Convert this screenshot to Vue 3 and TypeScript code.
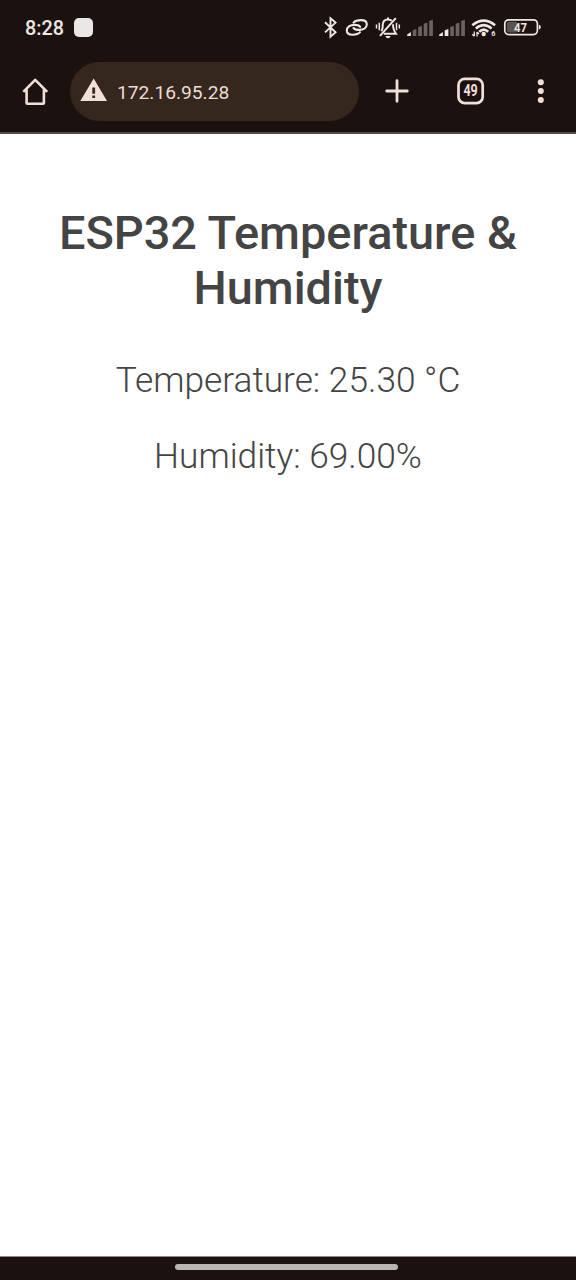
<script setup lang="ts">
interface Reading {
  label: string
  value: string
}

interface Bar {
  x: number
  y: number
  slope: number
  on: boolean
}

const readings: Reading[] = [
  { label: 'Temperature', value: '25.30 °C' },
  { label: 'Humidity', value: '69.00%' },
]

const tops: number[] = [16, 13, 9.7, 6.5, 3.7]

function makeBars(active: number): Bar[] {
  return tops.map((y, i) => ({ x: 0.2 + i * 5.5, y, slope: i === 0 ? 2.4 : 1.2, on: i < active }))
}

const signals: Bar[][] = [makeBars(1), makeBars(2)]
</script>

<template>
  <div class="screen">
    <header class="chrome">
      <div class="status">
        <span class="clock">8:28</span>
        <span class="app-dot"></span>
        <div class="status-icons">
          <svg class="bluetooth" width="14" height="24" viewBox="323 16 14 24">
            <path d="M325 22.3 335.6 32.2 330.5 36.6V18.2L335.6 22.6 325 32.4" fill="none" stroke="currentColor" stroke-width="1.9" />
          </svg>
          <svg class="link" width="24" height="24" viewBox="345 16 24 24">
            <g fill="none" stroke="currentColor" stroke-width="2.1" stroke-linecap="round">
              <path d="M353.6 22.6C355 20.9 357.8 20.1 361 20.1 364.6 20.1 366.8 21.7 366.8 24.3 366.8 27.8 363.6 29.9 359 29.9 356.6 29.9 354.6 29.4 353.5 28" />
              <path d="M360 32.2C358.6 33.9 355.8 34.7 352.6 34.7 349 34.7 346.8 33.1 346.8 30.5 346.8 27 350 24.9 354.6 24.9 357 24.9 359 25.4 360.1 26.8" />
            </g>
          </svg>
          <svg class="mute" width="26" height="24" viewBox="375 16 26 24">
            <g fill="none" stroke="currentColor" stroke-width="2">
              <path d="M381.3 31.2C383 29 382.7 27.5 382.7 25.2 382.7 21.6 384.8 19.4 388 19.4 389.6 19.4 390.9 19.9 391.8 20.8" />
              <path d="M393.1 24.3V26.5C393.1 29.5 394.4 31.4 396 33.7H383.8" />
              <path d="M380 35.8 395.8 18.2" />
              <path d="M376.5 24.5V28.5M379.3 22.7V30.2M396.5 22.7V30.2M399.3 24.5V28.5" stroke-width="1.5" />
            </g>
            <path d="M385.4 36H390.6Q390 38.2 388 38.2T385.4 36ZM387 17.4H389V20H387Z" fill="currentColor" />
          </svg>
          <svg v-for="(bars, n) in signals" :key="n" class="signal" width="27" height="24" viewBox="0 0 27 24">
            <path
              v-for="(bar, i) in bars"
              :key="i"
              :d="`M${bar.x} 20V${bar.y + bar.slope}L${bar.x + 3.7} ${bar.y}V19.4Q${bar.x + 3.7} 20 ${bar.x + 3.1} 20Z`"
              :class="bar.on ? 'bar-on' : 'bar-off'"
            />
          </svg>
          <svg class="wifi" width="26" height="24" viewBox="471 16 26 24">
            <g fill="none" stroke="currentColor" stroke-width="2.6">
              <path d="M472.3 25.2Q483.7 16 495.1 25.2" />
              <path d="M475.8 28.6Q483.7 21.8 491.6 28.6" />
              <path d="M479.2 31.7Q483.7 27.5 488.2 31.7" />
            </g>
            <circle cx="483.7" cy="34" r="2.2" fill="currentColor" />
            <path d="M474.3 31.5V36M474.3 36.3 472.3 34.2M477 36.5V32M477 32 479 34" fill="none" stroke="currentColor" stroke-width="1.3" />
            <text x="491.3" y="36.4" font-size="7.2" font-weight="700" fill="currentColor">6</text>
          </svg>
          <svg class="battery" width="39" height="24" viewBox="503 16 39 24">
            <rect x="504.8" y="19.8" width="32.6" height="14.8" rx="4" fill="none" stroke="currentColor" stroke-width="1.7" />
            <path d="M509 21.8H517V32.4H509Q506.8 32.4 506.8 30.2V24Q506.8 21.8 509 21.8Z" fill="#5a5451" />
            <path d="M538.9 24.8Q540.8 25 540.8 27.1T538.9 29.4Z" fill="currentColor" />
            <text x="520.5" y="31.7" text-anchor="middle" font-size="12.6" font-weight="700" textLength="13" lengthAdjust="spacingAndGlyphs" fill="currentColor">47</text>
          </svg>
        </div>
      </div>

      <nav class="toolbar">
        <button class="icon-btn home" type="button" aria-label="Home">
          <svg width="28" height="30" viewBox="21 76 28 30">
            <path d="M23.3 91.8 35.2 79.8 47.2 91.8M26.6 89.5V103Q26.6 103.7 27.3 103.7H43.2Q43.9 103.7 43.9 103V89.5" fill="none" stroke="currentColor" stroke-width="2.6" stroke-linejoin="round" />
          </svg>
        </button>
        <div class="address">
          <svg width="28" height="24" viewBox="80 78 28 24">
            <path d="M93.7 78.4 107 101.1H80.3ZM92.3 87.5V93.8H95.1V87.5ZM92.3 95.4V98.1H95.1V95.4Z" fill="currentColor" fill-rule="evenodd" />
          </svg>
          <span class="url">172.16.95.28</span>
        </div>
        <button class="icon-btn plus" type="button" aria-label="New tab">
          <svg width="24" height="24" viewBox="0 0 24 24">
            <path d="M12 1.7V22.3M1.7 12H22.3" stroke="currentColor" stroke-width="2.8" stroke-linecap="round" />
          </svg>
        </button>
        <button class="icon-btn tabs" type="button" aria-label="Tabs">
          <svg width="28" height="28" viewBox="0 0 28 28">
            <rect x="1.5" y="1.9" width="24.2" height="24.2" rx="6.2" fill="none" stroke="currentColor" stroke-width="2.7" />
            <text x="6.4" y="19.2" font-size="15.6" font-weight="700" textLength="14.4" lengthAdjust="spacingAndGlyphs" fill="currentColor">49</text>
          </svg>
        </button>
        <button class="icon-btn more" type="button" aria-label="Menu">
          <svg width="8" height="26" viewBox="0 0 8 26">
            <circle cx="3.8" cy="4.3" r="3" fill="currentColor" />
            <circle cx="3.8" cy="13.1" r="3" fill="currentColor" />
            <circle cx="3.8" cy="21.9" r="3" fill="currentColor" />
          </svg>
        </button>
      </nav>
    </header>

    <main class="page">
      <h1>ESP32 Temperature &amp; Humidity</h1>
      <p v-for="r in readings" :key="r.label">{{ r.label }}: {{ r.value }}</p>
    </main>

    <footer class="gesture"><span class="handle"></span></footer>
  </div>
</template>

<style>
body {
  margin: 0;
  background: #fff;
}
</style>

<style scoped>
.screen {
  display: flex;
  flex-direction: column;
  width: 576px;
  height: 1280px;
  overflow: hidden;
  background: #fff;
  font-family: Roboto, "Liberation Sans", sans-serif;
}

.chrome {
  box-sizing: border-box;
  height: 134px;
  flex: none;
  background: #1b120f;
  border-bottom: 2px solid #544b48;
}

svg {
  display: block;
  flex: none;
}

.status {
  display: flex;
  align-items: center;
  height: 56px;
  color: #eee8e5;
}

.clock {
  width: 49px;
  padding-top: 2px;
  padding-left: 25px;
  font-size: 19.8px;
  font-weight: 500;
  line-height: 24px;
}

.app-dot {
  width: 19px;
  height: 19px;
  margin-top: -1px;
  border-radius: 5px;
  background: #eae7e6;
}

.status-icons {
  display: flex;
  margin-left: auto;
  padding-right: 34px;
}

.link {
  margin-left: 8px;
}

.mute {
  margin-left: 6px;
}

.signal {
  margin-left: 5px;
}

.mute + .signal {
  margin-left: 6px;
}

.wifi {
  margin-left: 5px;
}

.battery {
  margin-left: 6px;
}

.bar-on {
  fill: #eee8e5;
}

.bar-off {
  fill: #6b6361;
}

.toolbar {
  display: flex;
  align-items: center;
  height: 70px;
  color: #f1dfd8;
}

.icon-btn {
  display: block;
  flex: none;
  padding: 0;
  border: 0;
  background: none;
  color: inherit;
  font-family: inherit;
}

.home {
  margin-left: 21px;
}

.address {
  display: flex;
  align-items: center;
  box-sizing: border-box;
  width: 289px;
  height: 59px;
  margin-left: 21px;
  padding-left: 10px;
  border-radius: 30px;
  background: #35261e;
}

.address svg {
  margin-top: -3px;
}

.url {
  margin-left: 9px;
  padding-top: 3px;
  font-size: 19.2px;
  line-height: 24px;
  color: #ecdcd4;
}

.plus {
  margin-left: 26px;
}

.tabs {
  margin-left: 48px;
}

.more {
  margin-left: 52px;
}

.page {
  flex: 1;
  padding: 71px 40px 0;
  text-align: center;
  color: #444;
}

h1 {
  margin: 0 0 44.7px;
  font-size: 46.9px;
  font-weight: 500;
  line-height: 55px;
}

p {
  margin: 0 0 35.2px;
  font-size: 35.25px;
  font-weight: 300;
  line-height: 41px;
}

.gesture {
  box-sizing: border-box;
  display: flex;
  justify-content: center;
  flex: none;
  height: 24px;
  padding: 7px 3px 0 0;
  border-top: 1px solid #8c8886;
  background: #1b120f;
}

.handle {
  width: 223px;
  height: 6px;
  border-radius: 3px;
  background: #bab5b3;
}
</style>
